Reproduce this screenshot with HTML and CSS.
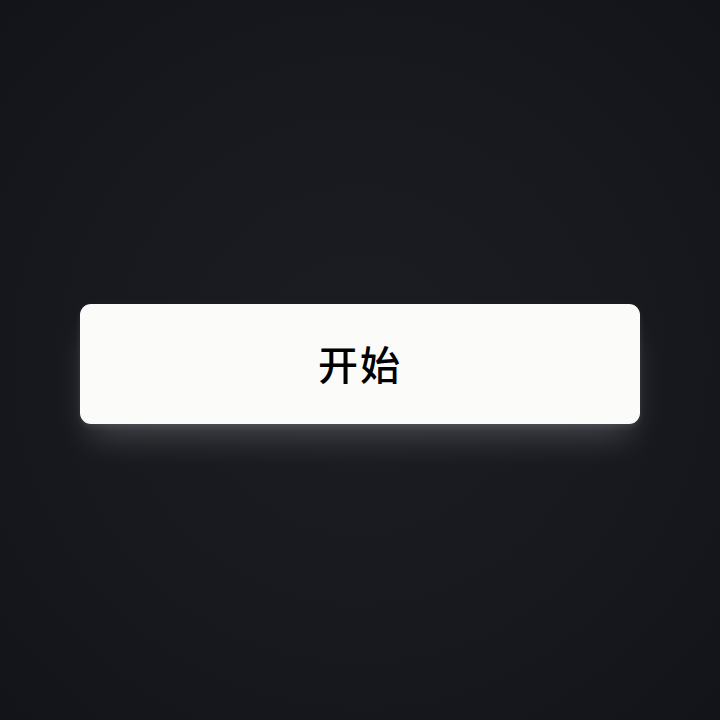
FILE: index.html
```html
<!DOCTYPE html>
<html lang="zh">
<head>
    <meta charset="UTF-8">
    <meta name="viewport" content="width=device-width, initial-scale=1.0">
    <title>开始</title>
    <link rel="stylesheet" href="styles.css">
</head>
<body>
    <div class="screen">
        <button class="start-btn" type="button">开始</button>
    </div>
</body>
</html>
```

FILE: styles.css
```css
* {
    margin: 0;
    padding: 0;
    box-sizing: border-box;
}

body {
    background: #16181d;
    font-family: "Noto Sans CJK SC", "Noto Sans", sans-serif;
}

.screen {
    width: 720px;
    height: 720px;
    display: flex;
    align-items: center;
    justify-content: center;
    background: radial-gradient(ellipse at 50% 50%, #1b1d22 0%, #17191e 55%, #131419 100%);
}

.start-btn {
    width: 560px;
    height: 120px;
    margin-top: 8px;
    padding-bottom: 2px;
    background: #fbfbf9;
    color: #000;
    border: none;
    border-radius: 11px;
    font-family: "Noto Sans CJK SC", "Noto Sans", sans-serif;
    font-size: 40px;
    font-weight: 500;
    letter-spacing: 2px;
    box-shadow: 0 22px 34px -10px rgba(255, 255, 255, 0.2), 0 3px 6px rgba(255, 255, 255, 0.1);
    cursor: pointer;
}
```
